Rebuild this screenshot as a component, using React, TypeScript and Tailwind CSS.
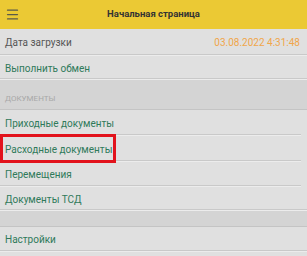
import { Menu } from "lucide-react";

function Row({
  children,
  inset = true,
  className = "h-[26px]",
}: {
  children: React.ReactNode;
  inset?: boolean;
  className?: string;
}) {
  return (
    <div className={`relative flex items-center px-[5px] ${className}`}>
      {children}
      <div
        className={`absolute bottom-0 left-0 h-[2px] border-t border-[#c9c9c9] border-b border-b-[#ececec] ${
          inset ? "right-[6px]" : "right-0"
        }`}
      />
    </div>
  );
}

export default function App() {
  const docs = [
    { label: "Приходные документы", h: "h-[26px]" },
    { label: "Расходные документы", h: "h-[26px]" },
    { label: "Перемещения", h: "h-[25px]" },
    { label: "Документы ТСД", h: "h-[24px]" },
  ];

  return (
    <div
      className="h-[256px] w-[307px] overflow-hidden bg-[#e0e0e0] text-[10px] text-[#2f7a5a]"
      style={{ fontFamily: "Roboto, 'Noto Sans', sans-serif" }}
    >
      <header className="flex h-[29px] items-center bg-[#ebc934] px-[5px]">
        <Menu className="h-[15px] w-[15px] text-[#5a5a4a]" strokeWidth={2} />
        <h1 className="flex-1 pr-[15px] text-center text-[9.5px] font-bold text-[#333]">
          Начальная страница
        </h1>
      </header>

      <Row inset={false} className="h-[27px]">
        <span className="text-[#555]">Дата загрузки</span>
        <span className="ml-auto pr-[2px] text-[#f0a64a]">03.08.2022 4:31:48</span>
      </Row>
      <Row inset={false} className="h-[24px]">
        <span>Выполнить обмен</span>
      </Row>

      <div className="flex h-[29px] items-end bg-[#d4d4d4] px-[5px] pb-[4px] text-[8px] uppercase text-[#a8a8a8]">
        Документы
      </div>
      <div className="h-px bg-[#c4c4c4]" />

      {docs.map((d, i) => (
        <Row key={d.label} inset={i < docs.length - 1} className={d.h}>
          <span>{d.label}</span>
          {i === 1 && (
            <div className="pointer-events-none absolute left-0 top-[-2px] z-10 h-[29px] w-[116px] border-[3px] border-[#e2131c]" />
          )}
        </Row>
      ))}

      <div className="h-[15px] bg-[#d4d4d4]" />
      <div className="h-px bg-[#c4c4c4]" />

      <Row inset={false} className="h-[25px]">
        <span>Настройки</span>
      </Row>
    </div>
  );
}
